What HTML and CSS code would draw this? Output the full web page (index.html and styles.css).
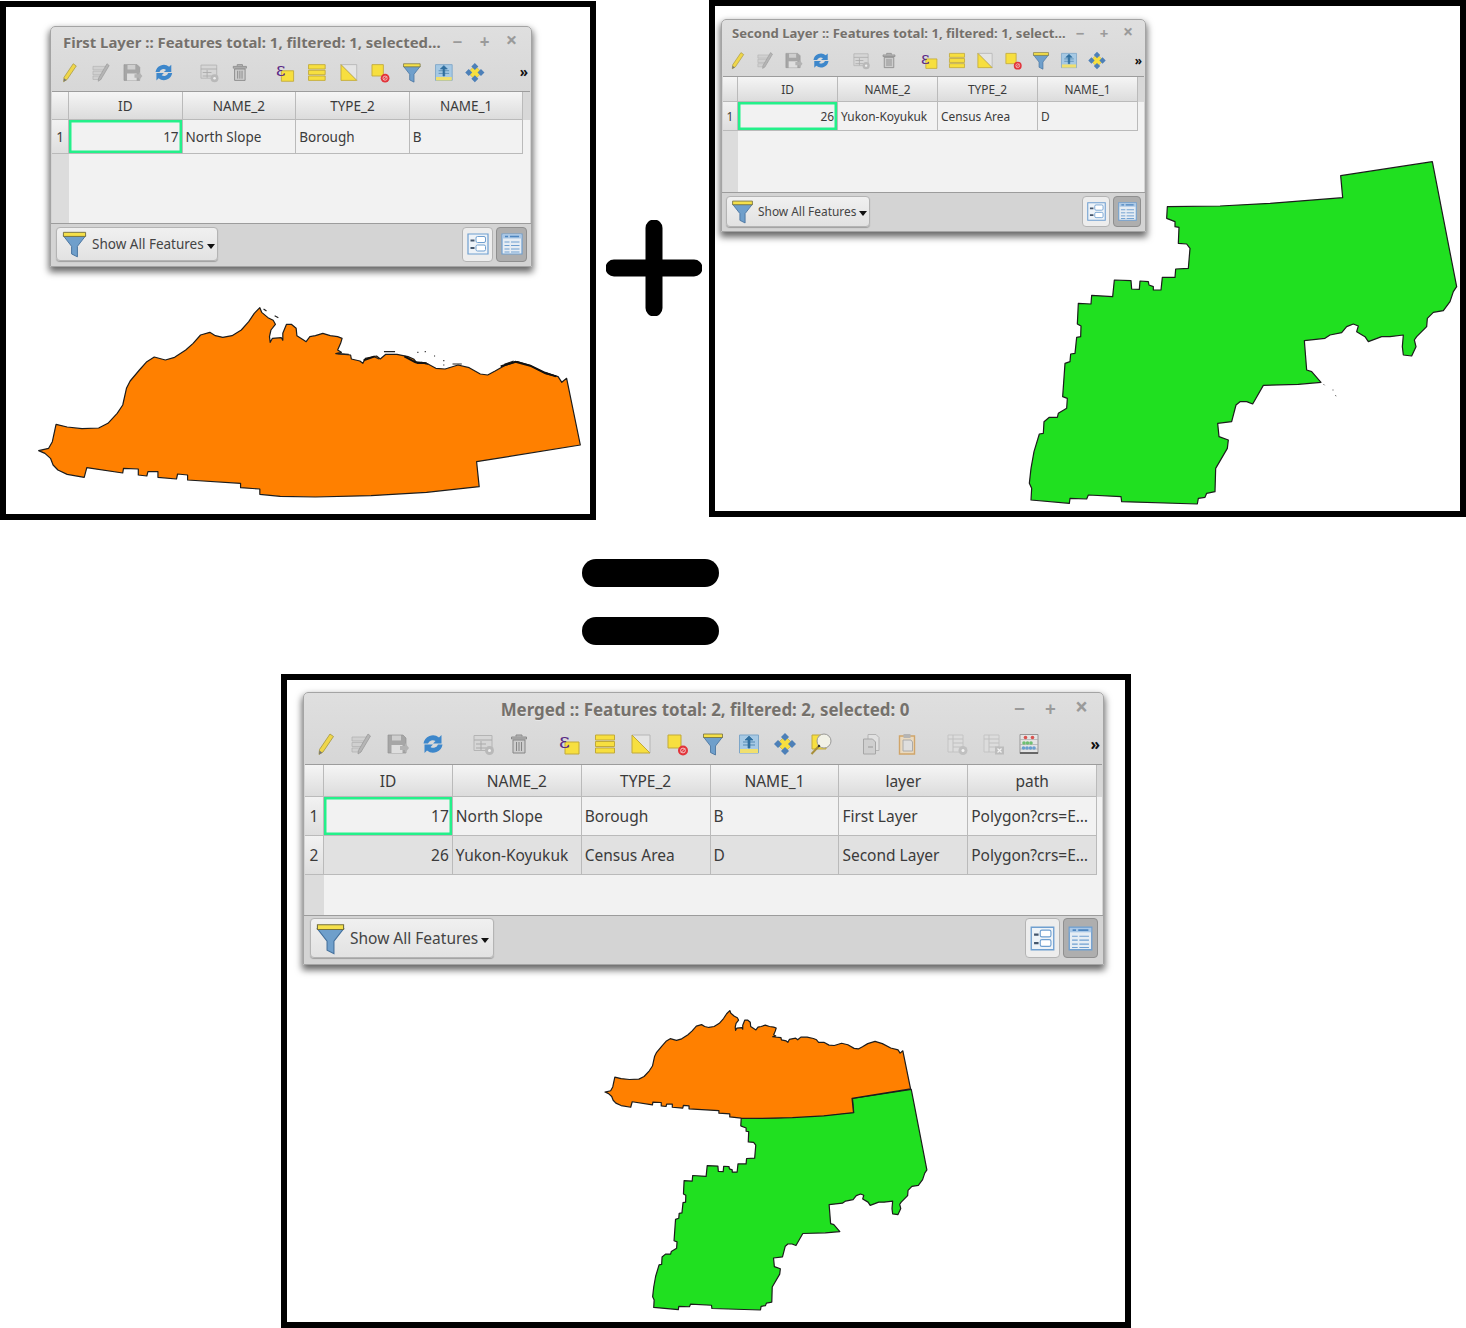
FILE: index.html
```html
<!DOCTYPE html>
<html lang="en">
<head>
  <meta charset="UTF-8">
  <title>Merging two vector layers</title>
  <link rel="stylesheet" href="styles.css">
</head>
<body>
  <svg class="sprite" xmlns="http://www.w3.org/2000/svg">
    <defs>
      <path id="north" class="land" d="M53 467L80 460 90 440 100 388 130 396 170 401 215 399 240 385 265 355 280 330 290 280 300 258 325 225 345 200 365 186 395 195 420 187 450 165 470 145 490 120 515 112 530 122 550 127 575 122 600 105 620 80 635 55 650 38 655 52 672 68 686 76 692 88 680 105 676 125 678 142 684 130 708 128 712 136 712 115 722 88 735 88 748 100 750 122 768 135 775 140 785 125 800 122 820 115 840 122 860 125 872 130 868 145 860 165 870 172 855 176 895 180 897 192 920 198 928 205 935 190 965 183 975 192 990 178 1020 178 1050 185 1065 192 1075 205 1100 205 1125 220 1150 222 1185 210 1215 218 1245 237 1265 240 1285 228 1310 212 1345 200 1380 212 1420 235 1455 245 1465 262 1478 250 1515 450 1235 500 1242 575 1100 592 950 602 800 606 705 604 650 598 650 582 598 578 598 565 455 555 455 540 428 537 425 552 375 547 375 530 348 530 345 543 322 540 322 522 282 520 280 534 183 518 176 547 130 538 105 525 92 510 85 490 70 475Z"/>
      <path id="yukon" class="land" d="M442 170L600 168 750 160 968 143 962 77 1237 35 1310 410 1300 425 1290 455 1270 482 1240 487 1222 505 1220 530 1190 560 1183 570 1188 590 1175 618 1150 615 1147 590 1150 555 1110 560 1085 560 1045 575 1035 560 1010 545 1015 528 1000 522 980 530 965 548 930 555 915 565 853 572 860 660 875 665 903 697 835 703 730 706 698 762 680 755 660 755 648 765 635 815 593 820 597 860 625 870 622 895 587 955 585 1025 560 1030 555 1042 535 1045 532 1062 305 1055 303 1040 205 1035 200 1047 150 1045 148 1060 33 1050 35 1015 28 1000 33 955 42 905 58 852 70 850 72 815 88 802 112 802 115 790 140 775 142 745 128 740 135 640 150 635 152 612 165 610 170 562 182 560 183 528 172 522 175 460 213 462 215 436 278 440 283 390 333 392 335 417 358 418 360 393 385 395 387 405 400 410 400 420 423 420 427 382 465 382 467 357 505 355 510 295 500 282 475 280 477 232 465 230 465 215 440 205Z"/>

      <symbol id="i-pencil" viewBox="0 0 24 24">
        <path d="M17 2l3.500 2.500L10 20l-4 2.500.5-5z" fill="#efd64a" stroke="#a3953f" stroke-width=".8"/>
        <path d="M6 22.500l.4-4 3 2.200z" fill="#777"/>
      </symbol>
      <symbol id="i-edit" viewBox="0 0 24 24">
        <path d="M3 5h15v4H3zM3 10.500h12v4H3zM3 16h9v4H3z" fill="#d0d0d0" stroke="#b0b0b0" stroke-width=".7"/>
        <path d="M19 2l2.500 2L12 20l-3 2 .4-3.500z" fill="#b5b5b5" stroke="#979797" stroke-width=".7"/>
      </symbol>
      <symbol id="i-save" viewBox="0 0 24 24">
        <path d="M3 3h15l3 3v15H3z" fill="#a6a6a6" stroke="#939393" stroke-width=".7"/>
        <path d="M7 3.500h9v5H7z" fill="#cfcfcf"/>
        <path d="M6.500 13h11v8h-11z" fill="#dedede"/>
        <path d="M15 14h5v-3l4 5-4 5v-3h-5z" fill="#b3b3b3"/>
      </symbol>
      <symbol id="i-reload" viewBox="0 0 24 24">
        <path d="M2.500 11.500a9.500 9.500 0 0 1 15.500-6l2.500-2.500v8.500h-8.500l2.500-2.500a5 5 0 0 0-7.500 2.500z" fill="#3d87cb"/>
        <path d="M21.500 12.500a9.500 9.500 0 0 1-15.500 6l-2.500 2.500v-8.500H12L9.500 15a5 5 0 0 0 7.500-2.500z" fill="#3d87cb"/>
      </symbol>
      <symbol id="i-addrow" viewBox="0 0 24 24">
        <path d="M3 3.500h18v15H3z" fill="#d6d6d6" stroke="#b4b4b4"/>
        <path d="M3 8h18M5 12h10M5 16h10M10 9v9" stroke="#aaa" fill="none"/>
        <circle cx="18.500" cy="18.500" r="4.500" fill="#b9b9b9"/>
        <circle cx="18.500" cy="18.500" r="1.500" fill="#eee"/>
      </symbol>
      <symbol id="i-trash" viewBox="0 0 24 24">
        <path d="M9 4.500V3h6v1.500M4.500 5h15v2h-15z" fill="#bbb" stroke="#8a8a8a"/>
        <path d="M6 8h12v13H6z" fill="#cdcdcd" stroke="#858585"/>
        <path d="M9.500 10v9M12 10v9M14.500 10v9" stroke="#858585"/>
      </symbol>
      <symbol id="i-expr" viewBox="0 0 24 24">
        <path d="M8 10h14v12H8z" fill="#f7df3f" stroke="#c1a93a"/>
        <text x="2" y="16" class="epsilon">ε</text>
      </symbol>
      <symbol id="i-all" viewBox="0 0 24 24">
        <path d="M2.500 3h19v5h-19zM2.500 9.500h19v5h-19zM2.500 16h19v5h-19z" fill="#f7df3f" stroke="#c1a93a"/>
      </symbol>
      <symbol id="i-invert" viewBox="0 0 24 24">
        <path d="M3 3h18v18z" fill="#e4e4e4" stroke="#b6b6b6"/>
        <path d="M3 3l18 18H3z" fill="#f7df3f" stroke="#c1a93a"/>
      </symbol>
      <symbol id="i-desel" viewBox="0 0 24 24">
        <path d="M3 3h13v13H3z" fill="#f7df3f" stroke="#c1a93a"/>
        <circle cx="18" cy="18.500" r="5" fill="#e2343b"/>
        <circle cx="18" cy="18.500" r="2.400" fill="none" stroke="#f4c6c6"/>
        <path d="M16 20.500l4-4" stroke="#f4c6c6"/>
      </symbol>
      <symbol id="i-funnel" viewBox="0 0 24 24">
        <path d="M2.500 5h19l-7 9v9l-5-2.500V14z" fill="#6f9fcb" stroke="#44709c" stroke-width=".8"/>
        <path d="M2.500 2h19v3.500h-19z" fill="#f5e04a" stroke="#75703d" stroke-width=".8"/>
      </symbol>
      <symbol id="i-top" viewBox="0 0 24 24">
        <path d="M2.500 3h19v18h-19z" fill="#a6c9e4" stroke="#7da6c8"/>
        <path d="M3 17h18v4H3z" fill="#f0df6e"/>
        <path d="M12 4l-4 4h3v8h2V8h3zM6 10h12M6 13h12" fill="#2f6f9f" stroke="#2f6f9f" stroke-width=".7"/>
      </symbol>
      <symbol id="i-pan" viewBox="0 0 24 24">
        <path d="M12 4l8 8-8 8-8-8z" fill="#f7df3f" stroke="#c1a93a" stroke-width=".6"/>
        <path d="M12 1l4 4-4 4-4-4zM12 15l4 4-4 4-4-4zM5 8l4 4-4 4-4-4zM19 8l4 4-4 4-4-4z" fill="#4d80b8"/>
      </symbol>
      <symbol id="i-zoom" viewBox="0 0 24 24">
        <path d="M3 3h14v14H3z" fill="#f7df3f" stroke="#c1a93a"/>
        <circle cx="15" cy="9" r="7" fill="#f1f1e6" stroke="#999"/>
        <path d="M9.500 14.500L2.500 22" stroke="#a88f3a" stroke-width="2"/>
        <circle cx="10" cy="14" r="1.200" fill="#333"/>
      </symbol>
      <symbol id="i-copy" viewBox="0 0 24 24">
        <path d="M9 2.500h8l3 3v13H9z" fill="#e0e0e0" stroke="#b4b4b4"/>
        <path d="M4.500 7h9l3 3v12h-12z" fill="#cfcfcf" stroke="#a6a6a6"/>
        <path d="M9 15h5" stroke="#999"/>
      </symbol>
      <symbol id="i-paste" viewBox="0 0 24 24">
        <path d="M4.500 4h15v18h-15z" fill="#e9d9bf" stroke="#d0a56a" stroke-width="1.400"/>
        <path d="M8.500 2h7v4h-7z" fill="#b5b5b5"/>
        <path d="M8 8h8l1.500 2v9H8z" fill="#dedede" stroke="#aaa"/>
      </symbol>
      <symbol id="i-newcol" viewBox="0 0 24 24">
        <path d="M3 3h15v17H3z" fill="#dcdcdc" stroke="#c4c4c4"/>
        <path d="M8 3v17M8 7h10M8 11h10M8 15h10M3 7h5" stroke="#c0c0c0" fill="none"/>
        <circle cx="18" cy="18.500" r="4.500" fill="#c0c0c0"/>
        <circle cx="18" cy="18.500" r="1.500" fill="#f2f2f2"/>
      </symbol>
      <symbol id="i-delcol" viewBox="0 0 24 24">
        <path d="M3 3h15v17H3z" fill="#dcdcdc" stroke="#c4c4c4"/>
        <path d="M8 3v17M8 7h10M8 11h10M8 15h10M3 7h5" stroke="#c0c0c0" fill="none"/>
        <path d="M14 14.500h9v8h-9z" fill="#bdbdbd"/>
        <path d="M16.500 16.500l4 4m0-4l-4 4" stroke="#f2f2f2" stroke-width="1.200"/>
      </symbol>
      <symbol id="i-calc" viewBox="0 0 24 24">
        <path d="M3 2.500h18v19H3z" fill="#e4e4e4" stroke="#999"/>
        <path d="M3 20h18v2H3z" fill="#666"/>
        <path d="M3 7.500h18M3 12.500h18M3 17h18" stroke="#aaa" stroke-width=".7"/>
        <circle cx="8.500" cy="5.500" r="1.800" fill="#d9534f"/><circle cx="15.500" cy="5.500" r="1.800" fill="#d9534f"/>
        <circle cx="7" cy="11" r="1.800" fill="#6fbf73"/><circle cx="10.500" cy="11" r="1.800" fill="#6fbf73"/><circle cx="14" cy="11" r="1.800" fill="#6fbf73"/>
        <circle cx="6.500" cy="16" r="1.800" fill="#6a9fd0"/><circle cx="10" cy="16" r="1.800" fill="#6a9fd0"/><circle cx="13.500" cy="16" r="1.800" fill="#6a9fd0"/><circle cx="17" cy="16" r="1.800" fill="#6a9fd0"/>
      </symbol>
      <symbol id="i-form" viewBox="0 0 24 24">
        <path d="M2 2h20v20H2z" fill="#eef3f8" stroke="#6f9fd0" stroke-width="1.200"/>
        <path d="M4.500 7.500h4v2h-4zM4.500 15h4v2h-4z" fill="#44566c"/>
        <rect x="10" y="4.500" width="9.500" height="6" rx="1.500" fill="#fff" stroke="#6f9fd0"/>
        <rect x="10" y="13" width="9.500" height="6" rx="1.500" fill="#fff" stroke="#6f9fd0"/>
      </symbol>
      <symbol id="i-table" viewBox="0 0 24 24">
        <path d="M2 2h20v20H2z" fill="#e6edf4" stroke="#6f9fd0" stroke-width="1.200"/>
        <path d="M2.500 2.500h19v4h-19z" fill="#a9c7e6"/>
        <path d="M5 4.500h3M10 4.500h9" stroke="#4f86bf" stroke-width="1.500"/>
        <path d="M4.500 10h5M11 10h8.500M4.500 13.500h5M11 13.500h8.500M4.500 17h5M11 17h8.500M4.500 20h5M11 20h8.500" stroke="#6f9fd0" stroke-width="1.100"/>
      </symbol>
    </defs>
  </svg>

  <div class="page">
    <div class="top-row">

      <section class="frame frame-first">
        <div class="win win-a">
          <div class="win-title">
            <span class="win-name">First Layer :: Features total: 1, filtered: 1, selected…</span>
            <span class="win-btns"><span>−</span><span>+</span><span class="x">×</span></span>
          </div>
          <div class="toolbar">
            <svg class="ic"><use href="#i-pencil"/></svg>
            <svg class="ic"><use href="#i-edit"/></svg>
            <svg class="ic"><use href="#i-save"/></svg>
            <svg class="ic"><use href="#i-reload"/></svg>
            <i class="sep"></i>
            <svg class="ic"><use href="#i-addrow"/></svg>
            <svg class="ic"><use href="#i-trash"/></svg>
            <i class="sep"></i>
            <svg class="ic"><use href="#i-expr"/></svg>
            <svg class="ic"><use href="#i-all"/></svg>
            <svg class="ic"><use href="#i-invert"/></svg>
            <svg class="ic"><use href="#i-desel"/></svg>
            <svg class="ic"><use href="#i-funnel"/></svg>
            <svg class="ic"><use href="#i-top"/></svg>
            <svg class="ic"><use href="#i-pan"/></svg>
            <span class="more">»</span>
          </div>
          <div class="grid">
            <table>
              <thead>
                <tr><th class="corner"></th><th>ID</th><th>NAME_2</th><th>TYPE_2</th><th>NAME_1</th></tr>
              </thead>
              <tbody>
                <tr><th>1</th><td class="num cur">17</td><td>North Slope</td><td>Borough</td><td>B</td></tr>
              </tbody>
            </table>
          </div>
          <div class="bottom">
            <button class="filter-btn"><svg class="big-funnel"><use href="#i-funnel"/></svg>Show All Features<i class="caret"></i></button>
            <div class="views">
              <span class="view"><svg><use href="#i-form"/></svg></span>
              <span class="view on"><svg><use href="#i-table"/></svg></span>
            </div>
          </div>
        </div>
        <svg class="map map-first" viewBox="0 0 1533 675" preserveAspectRatio="none">
          <use href="#north" class="orange"/>
          <path class="specks" d="M660 42l8 6M690 62l10 6M1075 172h3M1095 170h3M1120 183h3M1145 197h3M1145 210h3M985 170h30M1170 207h25M1310 208l25-10M1420 232l30 12M960 186l12 6M1085 202l20 6M860 176l30 2"/>
          <path class="coast" d="M1300 214l40-14 40 12 40 22 30 10M930 196l30-12M1040 184l30 18 30 3"/>
        </svg>
      </section>

      <div class="plus">
        <svg viewBox="0 0 96 96"><path d="M48 8v80M8 48h80"/></svg>
      </div>

      <section class="frame frame-second">
        <svg class="map map-second" viewBox="0 0 1338 1110">
          <use href="#yukon" class="green"/>
          <path class="specks thin" d="M910 702l4 4M937 720h4M945 736l4 2"/>
        </svg>
        <div class="win win-b">
          <div class="win-title">
            <span class="win-name">Second Layer :: Features total: 1, filtered: 1, select…</span>
            <span class="win-btns"><span>−</span><span>+</span><span class="x">×</span></span>
          </div>
          <div class="toolbar">
            <svg class="ic"><use href="#i-pencil"/></svg>
            <svg class="ic"><use href="#i-edit"/></svg>
            <svg class="ic"><use href="#i-save"/></svg>
            <svg class="ic"><use href="#i-reload"/></svg>
            <i class="sep"></i>
            <svg class="ic"><use href="#i-addrow"/></svg>
            <svg class="ic"><use href="#i-trash"/></svg>
            <i class="sep"></i>
            <svg class="ic"><use href="#i-expr"/></svg>
            <svg class="ic"><use href="#i-all"/></svg>
            <svg class="ic"><use href="#i-invert"/></svg>
            <svg class="ic"><use href="#i-desel"/></svg>
            <svg class="ic"><use href="#i-funnel"/></svg>
            <svg class="ic"><use href="#i-top"/></svg>
            <svg class="ic"><use href="#i-pan"/></svg>
            <span class="more">»</span>
          </div>
          <div class="grid">
            <table>
              <thead>
                <tr><th class="corner"></th><th>ID</th><th>NAME_2</th><th>TYPE_2</th><th>NAME_1</th></tr>
              </thead>
              <tbody>
                <tr><th>1</th><td class="num cur">26</td><td>Yukon-Koyukuk</td><td>Census Area</td><td>D</td></tr>
              </tbody>
            </table>
          </div>
          <div class="bottom">
            <button class="filter-btn"><svg class="big-funnel"><use href="#i-funnel"/></svg>Show All Features<i class="caret"></i></button>
            <div class="views">
              <span class="view"><svg><use href="#i-form"/></svg></span>
              <span class="view on"><svg><use href="#i-table"/></svg></span>
            </div>
          </div>
        </div>
      </section>
    </div>

    <div class="equals"><i></i><i></i></div>

    <section class="frame frame-merged">
      <div class="win win-c">
        <div class="win-title">
          <span class="win-name">Merged :: Features total: 2, filtered: 2, selected: 0</span>
          <span class="win-btns"><span>−</span><span>+</span><span class="x">×</span></span>
        </div>
        <div class="toolbar">
          <svg class="ic"><use href="#i-pencil"/></svg>
          <svg class="ic"><use href="#i-edit"/></svg>
          <svg class="ic"><use href="#i-save"/></svg>
          <svg class="ic"><use href="#i-reload"/></svg>
          <i class="sep"></i>
          <svg class="ic"><use href="#i-addrow"/></svg>
          <svg class="ic"><use href="#i-trash"/></svg>
          <i class="sep"></i>
          <svg class="ic"><use href="#i-expr"/></svg>
          <svg class="ic"><use href="#i-all"/></svg>
          <svg class="ic"><use href="#i-invert"/></svg>
          <svg class="ic"><use href="#i-desel"/></svg>
          <svg class="ic"><use href="#i-funnel"/></svg>
          <svg class="ic"><use href="#i-top"/></svg>
          <svg class="ic"><use href="#i-pan"/></svg>
          <svg class="ic"><use href="#i-zoom"/></svg>
          <i class="sep"></i>
          <svg class="ic"><use href="#i-copy"/></svg>
          <svg class="ic"><use href="#i-paste"/></svg>
          <i class="sep"></i>
          <svg class="ic"><use href="#i-newcol"/></svg>
          <svg class="ic"><use href="#i-delcol"/></svg>
          <svg class="ic"><use href="#i-calc"/></svg>
          <span class="more">»</span>
        </div>
        <div class="grid">
          <table>
            <thead>
              <tr><th class="corner"></th><th>ID</th><th>NAME_2</th><th>TYPE_2</th><th>NAME_1</th><th>layer</th><th>path</th></tr>
            </thead>
            <tbody>
              <tr><th>1</th><td class="num cur">17</td><td>North Slope</td><td>Borough</td><td>B</td><td>First Layer</td><td>Polygon?crs=E…</td></tr>
              <tr class="alt"><th>2</th><td class="num">26</td><td>Yukon-Koyukuk</td><td>Census Area</td><td>D</td><td>Second Layer</td><td>Polygon?crs=E…</td></tr>
            </tbody>
          </table>
        </div>
        <div class="bottom">
          <button class="filter-btn"><svg class="big-funnel"><use href="#i-funnel"/></svg>Show All Features<i class="caret"></i></button>
          <div class="views">
            <span class="view"><svg><use href="#i-form"/></svg></span>
            <span class="view on"><svg><use href="#i-table"/></svg></span>
          </div>
        </div>
      </div>
      <svg class="map map-merged" viewBox="0 0 1050 960">
        <use href="#yukon" class="green" transform="translate(170 245.400) scale(.6417 .6446)"/>
        <use href="#north" class="orange" transform="translate(11.800 10) scale(.627 .57)"/>
      </svg>
    </section>
  </div>
</body>
</html>
```

FILE: styles.css
```css
* { box-sizing: border-box; }
body {
  margin: 0;
  background: #fff;
  font-family: "Noto Sans", sans-serif;
  color: #3b3b3b;
}
.sprite { position: absolute; width: 0; height: 0; }
.page { width: 1466px; height: 1328px; overflow: hidden; }

/* page layout */
.top-row { display: flex; align-items: flex-start; height: 520px; }
.frame { border: 6px solid #000; background: #fff; position: relative; }
.frame-first { width: 596px; height: 519px; margin-top: 1px; padding: 19px 0 0 44px; }
.frame-second { width: 757px; height: 517px; padding: 13px 0 0 6px; }
.frame-merged { width: 850px; height: 654px; margin: 29px 0 0 281px; padding: 12px 0 0 16px; }
.plus { width: 113px; padding: 220px 0 0 10px; }
.plus svg { display: block; width: 96px; height: 96px; }
.plus path { fill: none; stroke: #000; stroke-width: 17; stroke-linecap: round; }
.equals { display: flex; flex-direction: column; gap: 30px; margin: 39px 0 0 582px; }
.equals i { display: block; width: 137px; height: 28px; border-radius: 14px; background: #000; }

/* maps */
.map { display: block; overflow: visible; }
.map-first { width: 568px; height: 225px; margin: 28px 0 0 -31px; }
.map-second { position: absolute; left: 305px; top: 144px; width: 446px; height: 370px; }
.map-merged { width: 350px; height: 320px; margin: 35px 0 0 287px; }
.land { stroke: #1c1c1c; stroke-width: 1.2px; stroke-linejoin: round; vector-effect: non-scaling-stroke; }
.orange { fill: #ff8000; }
.green { fill: #20e020; }
.specks { fill: none; stroke: #222; stroke-width: 1.2px; vector-effect: non-scaling-stroke; }
.specks.thin { stroke: #777; stroke-width: 1px; }
.coast { fill: none; stroke: #111; stroke-width: 2px; vector-effect: non-scaling-stroke; }

/* attribute table window */
.win {
  display: flex;
  flex-direction: column;
  position: relative;
  width: var(--w);
  height: var(--h);
  font-size: var(--fs);
  border: 1px solid #a4a4a4;
  border-radius: 5px 5px 0 0;
  background: linear-gradient(to bottom, #dfdfdf, #d4d4d4 90px);
  box-shadow: 0 4px 7px 1px rgba(0,0,0,.6);
}
.win-a {
  --w: 482px; --h: 241px; --fs: 13.5px; --pitch: 31.7px; --icon: 21px; --sep: 13px;
  --gut: 17px; --col: 113.6px; --head: 28px; --row: 34px;
}
.win-b {
  --w: 425px; --h: 213px; --fs: 11.9px; --pitch: 28px; --icon: 19px; --sep: 12px;
  --gut: 15px; --col: 100px; --head: 25px; --row: 29px;
}
.win-c {
  --w: 801px; --h: 273px; --fs: 15.5px; --pitch: 36px; --icon: 24px; --sep: 14px;
  --gut: 19px; --col: 128.85px; --head: 32px; --row: 39px;
}

.win-title { display: flex; align-items: center; white-space: nowrap; }
.win-name { flex: 1; font-weight: 700; color: #75716c; text-shadow: 0 1px 0 rgba(255,255,255,.4); }
.win-btns { display: flex; color: #9a9a9a; font-weight: 700; }
.win-btns span { text-align: center; }
.win-a .win-title { height: 29px; padding: 0 6px 0 12px; font-size: 14.9px; }
.win-b .win-title { height: 26px; padding: 0 5px 0 10px; font-size: 13.1px; }
.win-c .win-title { height: 32px; padding: 0 6px 0 102px; font-size: 16.9px; text-align: center; }
.win-a .win-btns span { width: 27px; font-size: 17px; }
.win-b .win-btns span { width: 24px; font-size: 15px; }
.win-c .win-btns span { width: 31px; font-size: 19px; }
.win-btns .x { font-size: 1.35em !important; line-height: 1; }

.toolbar { display: flex; align-items: center; }
.win-a .toolbar { height: 35px; padding: 0 0 3px 2px; }
.win-b .toolbar { height: 30px; padding: 0 0 2px 1px; }
.win-c .toolbar { height: 39px; padding: 0 0 1px 3px; }
.ic { flex: none; width: var(--pitch); height: var(--icon); }
.sep { flex: none; width: var(--sep); }
.more { margin-left: auto; padding-right: 3px; font-weight: 700; color: #111; }

.grid {
  flex: 1;
  min-height: 0;
  margin: 0 1px;
  border-top: 1px solid #9c9c9c;
  background:
    linear-gradient(#d8d8d8, #d8d8d8) top left / 100% var(--head) no-repeat,
    linear-gradient(to right, #dcdcdc var(--gut), #f2f2f2 0);
}
.grid table { border-collapse: separate; border-spacing: 0; table-layout: fixed; }
.grid th, .grid td {
  padding: 0;
  font-weight: 400;
  white-space: nowrap;
  overflow: hidden;
  border-right: 1px solid #bababa;
  border-bottom: 1px solid #bababa;
}
.grid thead th {
  width: var(--col);
  height: var(--head);
  background: linear-gradient(to bottom, #f5f5f5, #dcdcdc);
  text-align: center;
}
.grid thead th.corner, .grid tbody th { width: var(--gut); }
.grid tbody th { background: linear-gradient(to bottom, #f2f2f2, #dedede); text-align: center; }
.grid td { width: var(--col); height: var(--row); background: #f2f2f2; padding: 0 3px; }
.grid .alt td { background: #e1e1e1; }
.grid td.num { text-align: right; padding-right: 3px; }
.grid td.cur { box-shadow: inset 0 0 0 2.5px #24f08a; }

.bottom {
  display: flex;
  align-items: center;
  justify-content: space-between;
  border-top: 1px solid #9c9c9c;
  background: #d4d4d4;
}
.win-a .bottom { height: 43px; padding: 0 4px 2px 5px; }
.win-b .bottom { height: 39px; padding: 0 4px 2px 4px; }
.win-c .bottom { height: 49px; padding: 0 5px 4px 6px; }
.filter-btn {
  display: flex;
  align-items: center;
  padding: 0;
  font: inherit;
  color: #444;
  white-space: nowrap;
  border: 1px solid #b4b4b4;
  border-radius: 4px;
  background: linear-gradient(to bottom, #f0f0f0, #e2e2e2);
  box-shadow: 0 1px 1px rgba(0,0,0,.25);
}
.win-a .filter-btn { width: 162px; height: 34px; }
.win-b .filter-btn { width: 144px; height: 31px; }
.win-c .filter-btn { width: 184px; height: 40px; }
.big-funnel { flex: none; }
.win-a .big-funnel { width: 35px; height: 28px; }
.win-b .big-funnel { width: 31px; height: 25px; }
.win-c .big-funnel { width: 39px; height: 33px; }
.caret {
  margin: 4px 0 0 3px;
  border: 4px solid transparent;
  border-top: 5px solid #111;
  border-bottom: 0;
}
.views { display: flex; gap: 3px; }
.view {
  display: flex;
  align-items: center;
  justify-content: center;
  border: 1px solid #b4b4b4;
  border-radius: 4px;
  background: #ededed;
}
.view.on { background: #aeaeae; border-color: #8f8f8f; }
.win-a .view { width: 31px; height: 35px; }
.win-b .view { width: 28px; height: 31px; }
.win-c .view { width: 35px; height: 40px; }
.win-a .view svg { width: 24px; height: 24px; }
.win-b .view svg { width: 21px; height: 21px; }
.win-c .view svg { width: 27px; height: 27px; }
.epsilon { font: 400 21px "DejaVu Serif", serif; fill: #5a2a86; }
```
